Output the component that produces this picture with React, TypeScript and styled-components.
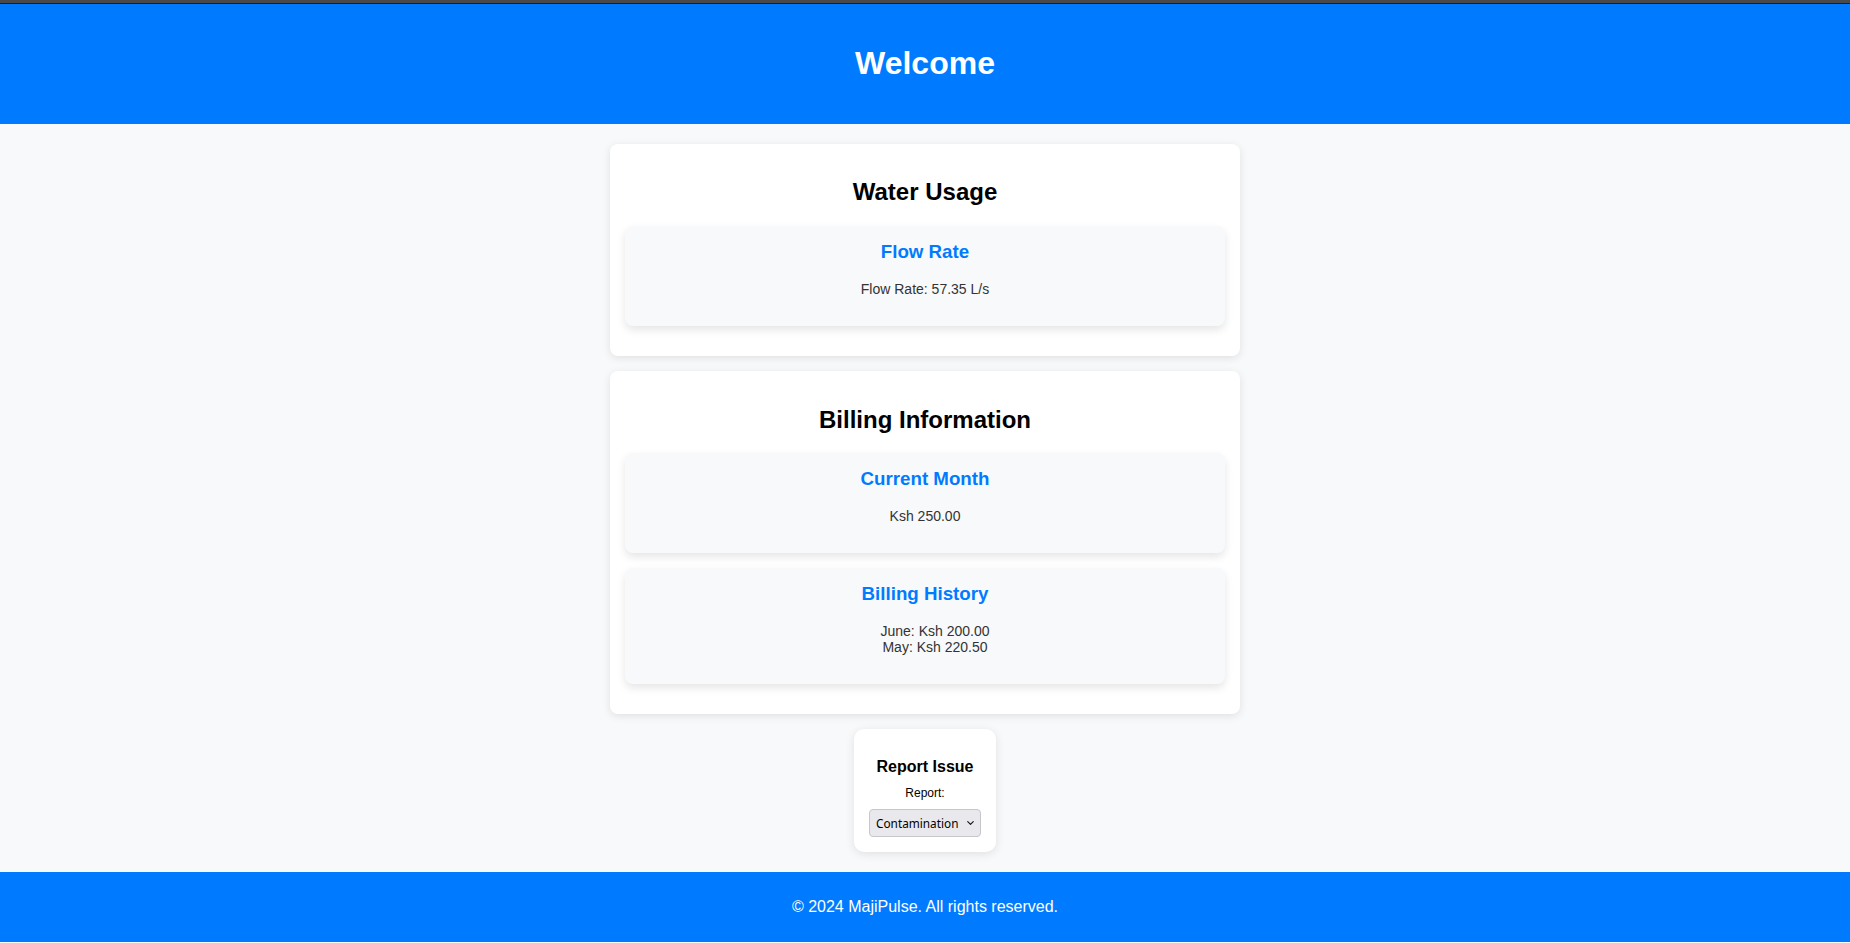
import styled, { createGlobalStyle } from 'styled-components'
import { ChevronDown } from 'lucide-react'

const GlobalStyle = createGlobalStyle`
  html, body {
    margin: 0;
    padding: 0;
  }
  body {
    font-family: 'Liberation Sans', Arial, sans-serif;
    background-color: #f8f9fa;
    color: #000;
  }
`

const history = [
  { month: 'June', amount: 'Ksh 200.00' },
  { month: 'May', amount: 'Ksh 220.50' },
]

export default function App() {
  return (
    <>
      <GlobalStyle />
      <TopEdge />
      <Header>
        <h1>Welcome</h1>
      </Header>
      <Main>
        <Section>
          <h2>Water Usage</h2>
          <Card>
            <h3>Flow Rate</h3>
            <p>Flow Rate: 57.35 L/s</p>
          </Card>
        </Section>
        <Section>
          <h2>Billing Information</h2>
          <Card>
            <h3>Current Month</h3>
            <p>Ksh 250.00</p>
          </Card>
          <Card>
            <h3>Billing History</h3>
            <HistoryList>
              {history.map((item) => (
                <li key={item.month}>
                  {item.month}: {item.amount}
                </li>
              ))}
            </HistoryList>
          </Card>
        </Section>
        <ReportCard>
          <h3>Report Issue</h3>
          <label htmlFor="issue">Report:</label>
          <SelectWrap>
            <select id="issue" defaultValue="contamination">
              <option value="contamination">Contamination</option>
              <option value="leak">Leak</option>
              <option value="outage">No Water</option>
            </select>
            <ChevronDown size={11} strokeWidth={2.6} />
          </SelectWrap>
        </ReportCard>
      </Main>
      <Footer>
        <p>© 2024 MajiPulse. All rights reserved.</p>
      </Footer>
    </>
  )
}

const TopEdge = styled.div`
  height: 3px;
  background-color: #4a4a4a;
  border-bottom: 1px solid #1e1e1e;
`

const Header = styled.header`
  background-color: #007bff;
  color: #fff;
  text-align: center;
  padding: 20px;
  h1 {
    font-size: 32px;
    margin: 21.44px 0;
  }
`

const Main = styled.main`
  padding: 20px;
  display: flex;
  flex-direction: column;
  align-items: center;
`

const Section = styled.section`
  width: 600px;
  padding: 15px;
  margin-bottom: 15px;
  background-color: #fff;
  border-radius: 8px;
  box-shadow: 0 2px 8px rgba(0, 0, 0, 0.1);
  h2 {
    font-size: 24px;
    text-align: center;
    margin: 19.6px 0;
  }
`

const Card = styled.div`
  background-color: #f8f9fa;
  border-radius: 8px;
  padding: 15px;
  margin: 15px 0;
  text-align: center;
  box-shadow: 0 4px 8px rgba(0, 0, 0, 0.1);
  h3 {
    color: #007bff;
    font-size: 18.72px;
    margin: 0 0 18px;
  }
  p {
    font-size: 14px;
    color: #333;
    margin: 14px 0;
  }
`

const HistoryList = styled.ul`
  list-style: none;
  padding: 0 0 0 20px;
  margin: 14px 0;
  font-size: 14px;
  color: #333;
`

const ReportCard = styled.div`
  background-color: #fff;
  border-radius: 10px;
  padding: 29px 15px 15px;
  text-align: center;
  box-shadow: 0 2px 10px rgba(0, 0, 0, 0.1);
  h3 {
    font-size: 16px;
    margin: 0 0 10px;
  }
  label {
    display: block;
    font-size: 12px;
    margin-bottom: 9px;
  }
`

const SelectWrap = styled.div`
  position: relative;
  display: inline-block;
  select {
    appearance: none;
    box-sizing: border-box;
    width: 112px;
    height: 28px;
    padding: 0 20px 0 6px;
    background-color: #e9e9ed;
    border: 1px solid #c6c6cc;
    border-radius: 4px;
    font-family: 'Noto Sans', 'DejaVu Sans', sans-serif;
    font-size: 11.8px;
    color: #000;
  }
  svg {
    position: absolute;
    right: 5px;
    top: 50%;
    transform: translateY(-50%);
    pointer-events: none;
    color: #1a1a1a;
  }
`

const Footer = styled.footer`
  background-color: #007bff;
  color: #fff;
  text-align: center;
  padding: 10px;
  p {
    font-size: 16px;
    margin: 16px 0;
  }
`
